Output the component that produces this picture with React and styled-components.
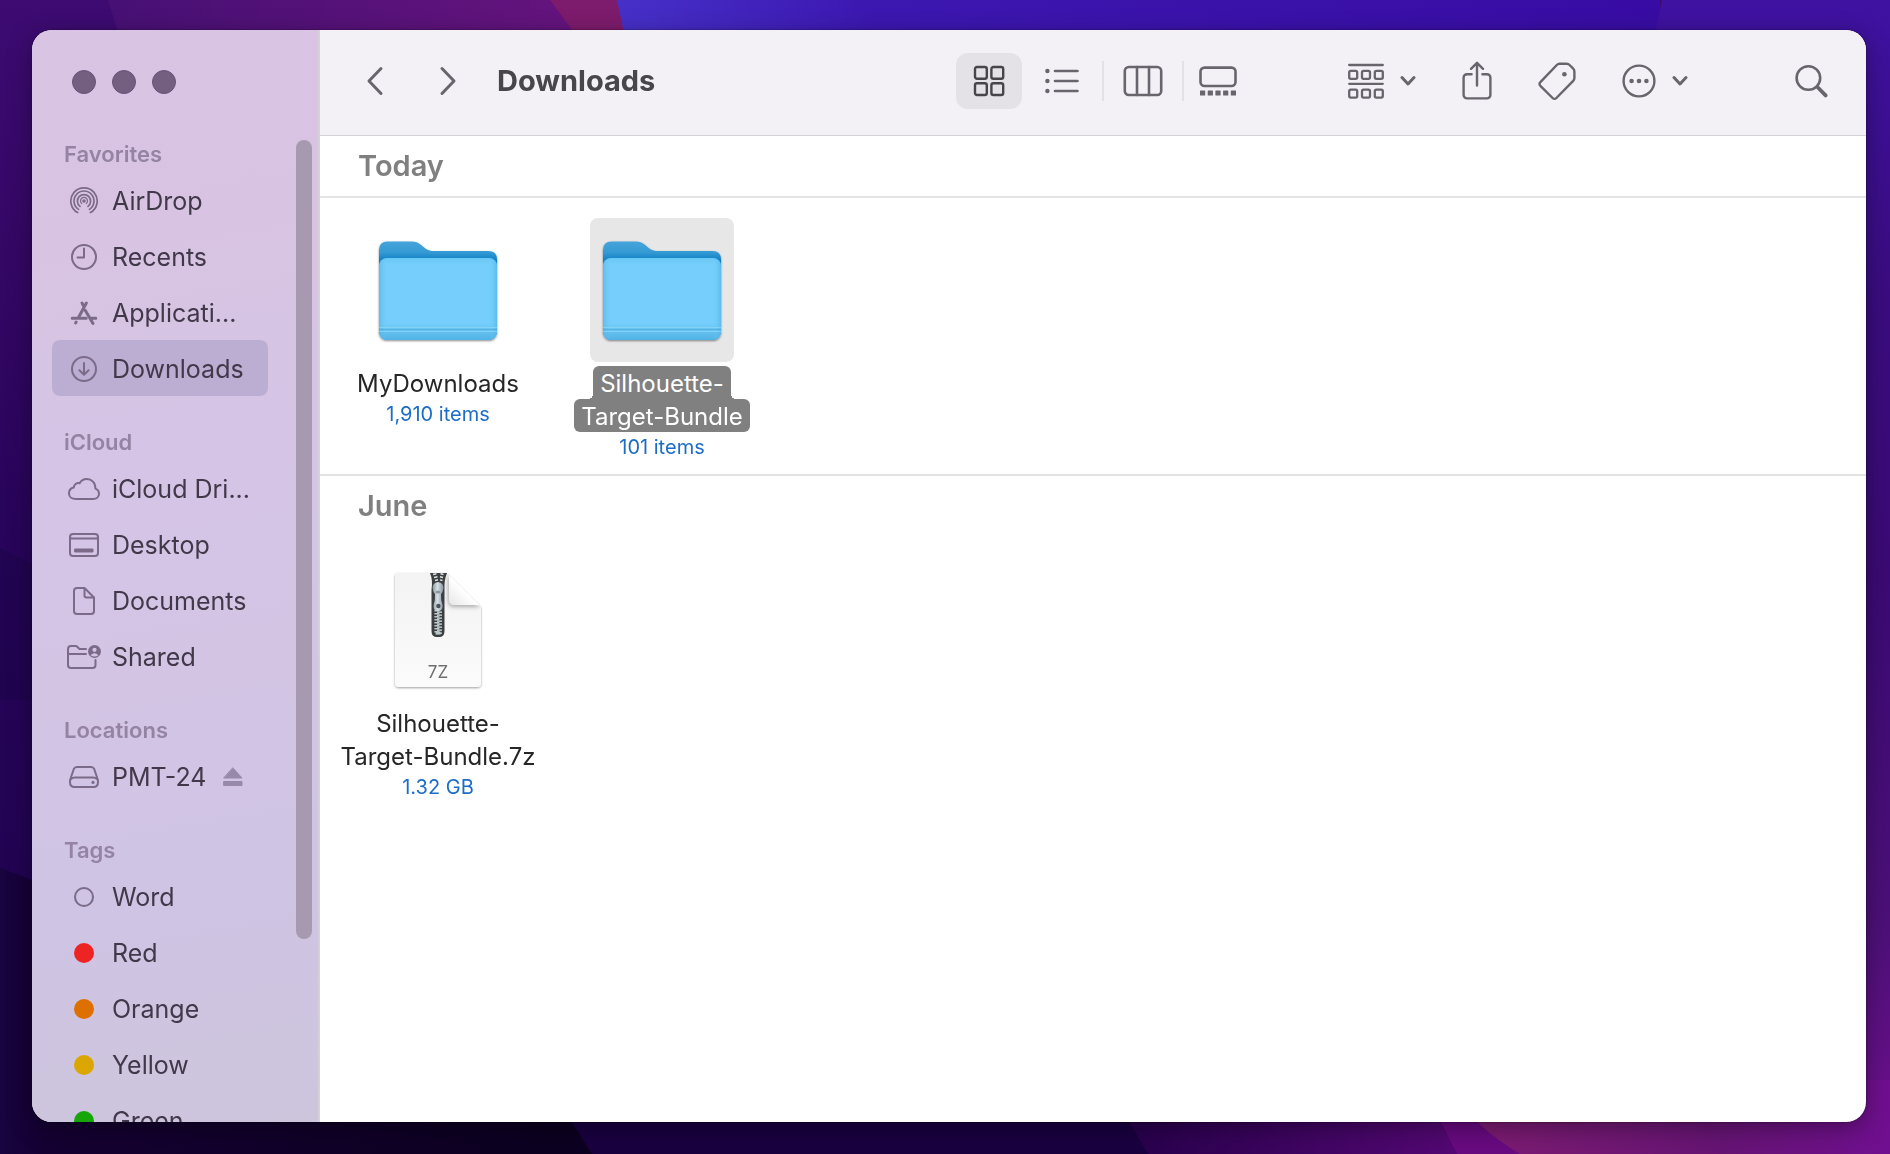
import React from "react";
import styled, { createGlobalStyle } from "styled-components";

const GlobalStyle = createGlobalStyle`
  * {
    box-sizing: border-box;
  }
  body {
    margin: 0;
    font-family: Inter, "Liberation Sans", sans-serif;
    background: #1c034c;
  }
  button {
    padding: 0;
    border: 0;
    background: none;
    font: inherit;
    color: inherit;
  }
  svg {
    display: block;
    flex: none;
  }
`;

const Desktop = styled.div`
  display: flex;
  height: 100vh;
  padding: 30px 24px 32px 32px;
`;

const WallpaperSvg = styled.svg`
  position: fixed;
  inset: 0;
  width: 100%;
  height: 100%;
  z-index: -1;
`;

const Window = styled.div`
  display: flex;
  flex: 1;
  min-width: 0;
  overflow: hidden;
  border-radius: 20px;
  background: #ffffff;
  box-shadow: 0 0 2px rgba(0, 0, 0, 0.6), 0 6px 24px rgba(0, 0, 0, 0.35);
`;

const Sidebar = styled.aside`
  display: flex;
  flex-direction: column;
  flex: none;
  width: 288px;
  overflow: hidden;
  border-right: 2px solid #d6d0dc;
  background: linear-gradient(
    170deg,
    #d9c5e3 0%,
    #d8c4e2 20%,
    #d5c4e6 40%,
    #d3c4e4 60%,
    #cfc4e4 78%,
    #cdc5dc 100%
  );
`;

const WindowControls = styled.div`
  display: flex;
  flex: none;
  align-items: center;
  gap: 16px;
  height: 106px;
  padding: 0 0 2px 40px;
`;

const ControlDot = styled.button`
  width: 24px;
  height: 24px;
  border-radius: 50%;
  border: 1px solid #67537a;
  background: #745f80;
`;

const SidebarScroll = styled.div`
  display: flex;
  flex: 1;
  justify-content: space-between;
  min-height: 0;
  padding: 0 6px 0 20px;
`;

const SidebarNav = styled.nav`
  width: 216px;
`;

const ScrollThumb = styled.div`
  width: 16px;
  height: 81%;
  margin-top: 4px;
  border-radius: 8px;
  background: #a699b0;
`;

const SidebarGroup = styled.section`
  margin-bottom: 28px;
`;

const GroupLabel = styled.h2`
  height: 36px;
  margin: 0;
  padding-left: 12px;
  font-size: 22px;
  font-weight: 600;
  line-height: 36px;
  color: #9583a3;
`;

const SidebarItem = styled.a`
  display: flex;
  align-items: center;
  gap: 12px;
  height: 56px;
  padding: 2px 0 0 16px;
  border-radius: 8px;
  font-size: 25px;
  line-height: 32px;
  white-space: nowrap;
  text-decoration: none;
  color: #41384a;
  background: ${(props) => (props.$active ? "#bcadd3" : "none")};
`;

const IconSlot = styled.span`
  display: flex;
  flex: none;
  justify-content: center;
  width: 32px;
  color: #7c6b88;
`;

const TagDot = styled.span`
  width: 20px;
  height: 20px;
  border-radius: 50%;
  border: ${(props) => (props.$color ? "0" : "2px solid #7a6b88")};
  background: ${(props) => props.$color || "none"};
`;

const EjectButton = styled.button`
  margin-left: 4px;
  color: #9888a9;
`;

const Main = styled.main`
  flex: 1;
  min-width: 0;
`;

const Toolbar = styled.header`
  display: flex;
  align-items: center;
  height: 106px;
  padding: 0 38px 3px 31px;
  border-bottom: 1px solid #d4d2d6;
  background: #f3f0f6;
  color: #69656c;
`;

const NavButton = styled.button`
  display: flex;
  align-items: center;
  justify-content: center;
  width: 48px;
  height: 56px;
  margin-right: 25px;
`;

const Title = styled.h1`
  margin: 0 auto 0 0;
  font-size: 29px;
  font-weight: 700;
  line-height: 40px;
  color: #48464a;
`;

const ViewSwitcher = styled.div`
  display: flex;
  align-items: center;
  height: 56px;
  margin-right: 96px;
`;

const ViewButton = styled.button`
  display: flex;
  align-items: center;
  justify-content: center;
  width: ${(props) => props.$width}px;
  height: 56px;
  border-radius: 12px;
  color: ${(props) => (props.$active ? "#48444a" : "inherit")};
  background: ${(props) => (props.$active ? "#e4e2e7" : "none")};
`;

const ViewDivider = styled.span`
  width: 2px;
  height: 40px;
  background: #e3e1e6;
`;

const Actions = styled.div`
  display: flex;
  align-items: center;
  gap: 46px;
  margin-right: 107px;
`;

const ActionButton = styled.button`
  display: flex;
  align-items: center;
  gap: 16px;
`;

const SectionHeader = styled.h2`
  height: 62px;
  margin: 0;
  padding-left: 38px;
  border-bottom: ${(props) => (props.$line ? "2px solid #e4e4e4" : "0")};
  font-size: 29px;
  font-weight: 600;
  line-height: 60px;
  color: #808080;
`;

const FileSection = styled.section`
  border-bottom: ${(props) => (props.$line ? "2px solid #e2e2e2" : "0")};
`;

const FileGrid = styled.div`
  display: flex;
  flex-wrap: wrap;
  padding: 20px 0 12px 6px;
`;

const FileTile = styled.button`
  display: flex;
  flex-direction: column;
  align-items: center;
  justify-content: flex-start;
  width: 224px;
  text-align: center;
`;

const FileIcon = styled.span`
  display: flex;
  align-items: center;
  justify-content: center;
  width: 144px;
  height: 144px;
  margin-bottom: 4px;
  border-radius: 8px;
  background: ${(props) => (props.$selected ? "#e7e7e7" : "none")};
`;

const FileName = styled.span`
  display: flex;
  flex-direction: column;
  align-items: center;
  font-size: 24px;
  line-height: 31px;
  color: ${(props) => (props.$selected ? "#ffffff" : "#262626")};
`;

const NameLine = styled.span`
  position: relative;
  padding: 2px 7px 0;
  border-radius: 6px;
  white-space: nowrap;
  background: ${(props) => (props.$selected ? "#808080" : "none")};

  &:first-child:not(:last-child) {
    border-radius: 6px 6px 0 0;
  }

  /* rounded inner corners where a short line meets a longer one */
  &:first-child:not(:last-child)::before,
  &:first-child:not(:last-child)::after {
    content: ${(props) => (props.$selected ? '""' : "none")};
    position: absolute;
    bottom: 0;
    width: 5px;
    height: 5px;
  }
  &::before {
    right: 100%;
    background: radial-gradient(circle at 0 0, transparent 5px, #808080 5px);
  }
  &::after {
    left: 100%;
    background: radial-gradient(circle at 100% 0, transparent 5px, #808080 5px);
  }
`;

const FileMeta = styled.span`
  font-size: 20px;
  line-height: 30px;
  color: #1c6dc8;
`;

const Wallpaper = () => (
  <WallpaperSvg viewBox="0 0 1890 1154" preserveAspectRatio="none" aria-hidden="true">
    <defs>
      <linearGradient id="wall-left" x1="0" y1="0" x2="0" y2="1">
        <stop offset="0" stopColor="#3d0b72" />
        <stop offset="0.2" stopColor="#350766" />
        <stop offset="0.46" stopColor="#28045a" />
        <stop offset="1" stopColor="#1c024c" />
      </linearGradient>
      <linearGradient id="wall-plum" x1="110" x2="600" y1="0" y2="0" gradientUnits="userSpaceOnUse">
        <stop offset="0" stopColor="#471074" />
        <stop offset="1" stopColor="#66147e" />
      </linearGradient>
      <linearGradient id="wall-blue" x1="617" x2="1650" y1="0" y2="0" gradientUnits="userSpaceOnUse">
        <stop offset="0" stopColor="#4630c8" />
        <stop offset="0.25" stopColor="#3c17b0" />
        <stop offset="1" stopColor="#380ca4" />
      </linearGradient>
      <linearGradient id="wall-right" x1="0" y1="0" x2="0" y2="1">
        <stop offset="0" stopColor="#3f12a2" />
        <stop offset="0.25" stopColor="#3a0c80" />
        <stop offset="0.5" stopColor="#3b0a74" />
        <stop offset="0.8" stopColor="#4c1078" />
        <stop offset="1" stopColor="#721090" />
      </linearGradient>
      <linearGradient id="wall-dark" x1="0" x2="560" y1="0" y2="0" gradientUnits="userSpaceOnUse">
        <stop offset="0" stopColor="#18043f" />
        <stop offset="0.08" stopColor="#150032" />
        <stop offset="1" stopColor="#0c0020" />
      </linearGradient>
      <linearGradient id="wall-violet" x1="1110" x2="1460" y1="0" y2="0" gradientUnits="userSpaceOnUse">
        <stop offset="0" stopColor="#25004a" />
        <stop offset="1" stopColor="#540874" />
      </linearGradient>
      <linearGradient id="wall-pink" x1="1470" x2="1890" y1="0" y2="0" gradientUnits="userSpaceOnUse">
        <stop offset="0" stopColor="#7e1c72" />
        <stop offset="0.6" stopColor="#661474" />
        <stop offset="1" stopColor="#700f90" />
      </linearGradient>
    </defs>
    <rect width="1890" height="1154" fill="url(#wall-left)" />
    <path d="M0 548L40 568V700H0Z" fill="#1c034a" opacity="0.5" />
    <path d="M108 0H640V200H170Z" fill="url(#wall-plum)" />
    <path d="M550 0H630V110Q580 40 550 0Z" fill="#7d1b6c" />
    <path d="M617 0H1660V200H660Z" fill="url(#wall-blue)" />
    <path d="M1662 0H1890V1154H1700V200H1620Z" fill="url(#wall-right)" />
    <path d="M0 868L60 890L540 1040L600 1154H0Z" fill="url(#wall-dark)" />
    <path d="M520 1040L592 1154H1200V1040Z" fill="#190040" />
    <path d="M1105 1080L1148 1154H1480V1080Z" fill="url(#wall-violet)" />
    <path d="M1420 1080L1457 1154H1540L1460 1080Z" fill="#680a80" />
    <path d="M1458 1100Q1480 1130 1520 1154H1890V1080H1450Z" fill="url(#wall-pink)" />
  </WallpaperSvg>
);

const Svg = ({ w, h, sw = 2, children }) => (
  <svg
    width={w}
    height={h}
    viewBox={`0 0 ${w} ${h}`}
    fill="none"
    stroke="currentColor"
    strokeWidth={sw}
    strokeLinecap="round"
    strokeLinejoin="round"
    aria-hidden="true"
  >
    {children}
  </svg>
);

const AirDropIcon = () => (
  <Svg w={30} h={30} sw={1.7}>
    <path d="M8.6 26.6A13.2 13.2 0 1 1 21.4 26.6" />
    <path d="M9.6 23.4A10 10 0 1 1 20.4 23.4" />
    <path d="M11 20.4A6.6 6.6 0 1 1 19 20.4" />
    <path d="M12.8 17.6A3.5 3.5 0 1 1 17.2 17.6" strokeWidth="1.2" />
    <circle cx="15" cy="15" r="1.8" fill="currentColor" stroke="none" />
  </Svg>
);

const RecentsIcon = () => (
  <Svg w={28} h={28}>
    <circle cx="14" cy="14" r="12" />
    <path d="M14 5.5V14.5H7.5" />
  </Svg>
);

const ApplicationsIcon = () => (
  <Svg w={28} h={26} sw={3}>
    <path d="M12 3L13.4 5.6M16.4 3L8.6 17.2M2.2 18.2H16.2M5.6 23L6.2 22" />
    <path d="M15.2 10.2L23 23.4M21 18.2H25.8" />
  </Svg>
);

const DownloadsIcon = () => (
  <Svg w={28} h={28}>
    <circle cx="14" cy="14" r="12" />
    <path d="M14 8V19.5M9.4 15.2L14 19.8L18.6 15.2" />
  </Svg>
);

const CloudIcon = () => (
  <Svg w={32} h={26}>
    <path d="M8 23H25.2C28.6 23 31 20.8 31 17.8C31 15.2 29.6 13.4 27.4 12.6C27.6 6.8 23.6 3 18.8 3C15.6 3 13 4.6 11.6 7.2C8.6 6.4 5.8 8.6 5.8 11.6C3 12.2 1 14.4 1 17.4C1 20.6 3.8 23 8 23Z" />
  </Svg>
);

const DesktopIcon = () => (
  <Svg w={30} h={24}>
    <rect x="1" y="1" width="28" height="22" rx="3" />
    <path d="M1 5.5H29" />
    <rect x="6" y="16" width="18" height="3" fill="currentColor" strokeWidth="1" />
  </Svg>
);

const DocumentsIcon = () => (
  <Svg w={22} h={28}>
    <path d="M4 1H11.5L21 10.5V24A3 3 0 0 1 18 27H4A3 3 0 0 1 1 24V4A3 3 0 0 1 4 1Z" />
    <path d="M11.5 1.5V8.5A2 2 0 0 0 13.5 10.5H20.5" />
  </Svg>
);

const SharedIcon = () => (
  <Svg w={34} h={26}>
    <path d="M19 5H12.5L10.5 3C10 2.4 9.4 2 8.6 2H4A3 3 0 0 0 1 5V21A3 3 0 0 0 4 24H25.5A3 3 0 0 0 28.5 21V16M1 10H19" />
    <circle cx="27.5" cy="7.5" r="6.5" fill="currentColor" stroke="none" />
    <circle cx="27.5" cy="5.8" r="2.1" fill="#d3c4e5" stroke="none" />
    <path d="M23.6 11.2Q27.5 7.2 31.4 11.2Q27.5 14 23.6 11.2Z" fill="#d3c4e5" stroke="none" />
  </Svg>
);

const DriveIcon = () => (
  <Svg w={30} h={24}>
    <path d="M7.8 2H22.2C23.6 2 24.6 2.8 25.2 4L28.6 14C28.9 15 29 16 29 17C29 20.4 27.4 22 24.6 22H5.4C2.6 22 1 20.4 1 17C1 16 1.1 15 1.4 14L4.8 4C5.4 2.8 6.4 2 7.8 2Z" />
    <path d="M2 14.2Q3.4 12.5 6 12.5H24Q26.6 12.5 28 14.2" />
    <circle cx="24" cy="17.4" r="1.6" fill="currentColor" stroke="none" />
  </Svg>
);

const EjectIcon = () => (
  <Svg w={20} h={20} sw={1}>
    <path d="M10 1L19 11H1Z" fill="currentColor" />
    <rect x="1" y="14.5" width="18" height="4" fill="currentColor" />
  </Svg>
);

const ChevronDown = () => (
  <Svg w={16} h={12} sw={3}>
    <path d="M2 2.5L8 9L14 2.5" />
  </Svg>
);

const GridIcon = () => (
  <Svg w={32} h={32} sw={2.4}>
    <rect x="2" y="2" width="11.8" height="11.8" rx="2" />
    <rect x="18.4" y="2" width="11.8" height="11.8" rx="2" />
    <rect x="2" y="18.2" width="11.8" height="11.8" rx="2" />
    <rect x="18.4" y="18.2" width="11.8" height="11.8" rx="2" />
  </Svg>
);

const ListIcon = () => (
  <Svg w={34} h={28} sw={2.6}>
    <path d="M10 4H32.5M10 14H32.5M10 24H32.5" />
    <g fill="currentColor" stroke="none">
      <circle cx="2.4" cy="4" r="2.2" />
      <circle cx="2.4" cy="14" r="2.2" />
      <circle cx="2.4" cy="24" r="2.2" />
    </g>
  </Svg>
);

const ColumnsIcon = () => (
  <Svg w={40} h={32} sw={2.6}>
    <rect x="1.8" y="2" width="36.4" height="28" rx="4" />
    <path d="M14 2V30M26 2V30" />
  </Svg>
);

const GalleryIcon = () => (
  <Svg w={38} h={32} sw={2.6}>
    <rect x="1.5" y="2.6" width="35" height="18.4" rx="4" />
    <g fill="currentColor" stroke="none">
      {[1, 8.7, 16.4, 24.1, 31.8].map((x) => (
        <rect key={x} x={x} y="25.4" width="5.2" height="5.2" rx="0.6" />
      ))}
    </g>
  </Svg>
);

const GroupIcon = () => (
  <Svg w={36} h={36} sw={2.3}>
    <path d="M1.2 2H34.8M1.2 20.8H34.8" />
    {[7.8, 26.6].map((y) =>
      [1.2, 14, 26.8].map((x) => (
        <rect key={`${x}-${y}`} x={x} y={y} width="8" height="8" rx="1.6" />
      ))
    )}
  </Svg>
);

const ShareIcon = () => (
  <Svg w={30} h={40} sw={2.4}>
    <path d="M9.6 13.2H5A3.4 3.4 0 0 0 1.6 16.6V34A3.4 3.4 0 0 0 5 37.4H25A3.4 3.4 0 0 0 28.4 34V16.6A3.4 3.4 0 0 0 25 13.2H20.4" />
    <path d="M15 24.6V2M9 7.8L15 1.8L21 7.8" />
  </Svg>
);

const TagIcon = () => (
  <Svg w={38} h={40} sw={2.4}>
    <path d="M21.4 2.8H28.6C30 2.8 30.8 3.2 31.6 4L35 7.4C36 8.4 36.4 9.2 36.4 10.6V17C36.4 18.2 36 19 35.2 19.8L18.4 37C17.2 38.2 15.8 38.2 14.6 37L2.4 24.8C1.2 23.6 1.2 22.4 2.4 21.2L18.8 4C19.6 3.2 20.2 2.8 21.4 2.8Z" />
    <circle cx="26.4" cy="13.2" r="2.3" fill="currentColor" stroke="none" />
  </Svg>
);

const MoreIcon = () => (
  <Svg w={34} h={34} sw={2.4}>
    <circle cx="17" cy="17" r="15.4" />
    <g fill="currentColor" stroke="none">
      <circle cx="9.6" cy="17" r="2.3" />
      <circle cx="17" cy="17" r="2.3" />
      <circle cx="24.4" cy="17" r="2.3" />
    </g>
  </Svg>
);

const SearchIcon = () => (
  <Svg w={33} h={34} sw={2.6}>
    <circle cx="13.4" cy="14" r="11.8" />
    <path d="M22.4 23L30.6 31.4" strokeWidth="3.8" />
  </Svg>
);

const FolderIcon = () => (
  <svg width="128" height="128" viewBox="0 0 128 128" aria-hidden="true">
    <defs>
      <linearGradient id="folder-back" x1="0" y1="0" x2="0" y2="1">
        <stop offset="0" stopColor="#46a4da" />
        <stop offset="0.11" stopColor="#349ad4" />
        <stop offset="0.19" stopColor="#0f80c4" />
      </linearGradient>
      <linearGradient id="folder-front" x1="0" y1="0" x2="0" y2="1">
        <stop offset="0" stopColor="#6ac8f6" />
        <stop offset="0.08" stopColor="#74cefb" />
        <stop offset="0.8" stopColor="#74cefb" />
        <stop offset="0.88" stopColor="#66c3f2" />
        <stop offset="1" stopColor="#52b2e4" />
      </linearGradient>
      <linearGradient id="folder-sides" x1="0" y1="0" x2="1" y2="0">
        <stop offset="0" stopColor="#4db0e4" stopOpacity="0.6" />
        <stop offset="0.07" stopColor="#74cefb" stopOpacity="0" />
        <stop offset="0.93" stopColor="#74cefb" stopOpacity="0" />
        <stop offset="1" stopColor="#4db0e4" stopOpacity="0.6" />
      </linearGradient>
      <filter id="folder-shadow" x="-10%" y="-10%" width="120%" height="125%">
        <feDropShadow dx="0" dy="1" stdDeviation="1" floodColor="#000" floodOpacity="0.45" />
      </filter>
    </defs>
    <g filter="url(#folder-shadow)">
      <path
        d="M5 24Q5 15.5 13.5 15.5H38Q43 15.5 46.5 18.5L51 22.2Q54.5 25 60 25H114.5Q123 25 123 33.5V104Q123 114 113 114H15Q5 114 5 104Z"
        fill="url(#folder-back)"
      />
      <rect x="5" y="32" width="118" height="82" rx="8" fill="url(#folder-front)" />
      <rect x="5" y="32" width="118" height="82" rx="8" fill="url(#folder-sides)" />
    </g>
    <path d="M5 101.5H123M5 105.5H123" stroke="#8ad6f8" strokeWidth="0.8" />
    <path d="M5 103.5H123" stroke="#50aede" strokeWidth="0.8" />
  </svg>
);

const teeth = [0, 1, 2, 3, 4, 5, 6, 7];

const ArchiveIcon = () => (
  <svg width="128" height="128" viewBox="0 0 128 128" aria-hidden="true">
    <defs>
      <linearGradient id="page-fill" x1="0" y1="0" x2="0" y2="1">
        <stop offset="0" stopColor="#f3f3f3" />
        <stop offset="1" stopColor="#fbfbfb" />
      </linearGradient>
      <linearGradient id="page-fold" x1="0" y1="1" x2="1" y2="0">
        <stop offset="0" stopColor="#e6e6e6" />
        <stop offset="0.45" stopColor="#ffffff" />
      </linearGradient>
      <linearGradient id="zip-pull" x1="0" y1="0" x2="1" y2="0">
        <stop offset="0" stopColor="#8f9ba2" />
        <stop offset="0.45" stopColor="#d5dfe5" />
        <stop offset="1" stopColor="#87949b" />
      </linearGradient>
      <filter id="page-shadow" x="-10%" y="-10%" width="120%" height="120%">
        <feDropShadow dx="0" dy="1" stdDeviation="1.2" floodColor="#000" floodOpacity="0.38" />
      </filter>
      <filter id="fold-shadow" x="-30%" y="-30%" width="160%" height="160%">
        <feDropShadow dx="-1" dy="2" stdDeviation="2" floodColor="#000" floodOpacity="0.3" />
      </filter>
      <clipPath id="page-clip">
        <path d="M24 7H73L107 41V117Q107 121 103 121H25Q21 121 21 117V10Q21 7 24 7Z" />
      </clipPath>
    </defs>
    <path
      d="M24 7H73L107 41V117Q107 121 103 121H25Q21 121 21 117V10Q21 7 24 7Z"
      fill="url(#page-fill)"
      filter="url(#page-shadow)"
    />
    <g clipPath="url(#page-clip)">
      <path d="M75 7V33Q75 39 81 39H107Z" fill="url(#page-fold)" filter="url(#fold-shadow)" />
    </g>
    <path d="M56 7H73Q70 14 70.5 24V65Q70.5 71 65 71H63Q57.5 71 57.5 65V24Q59 14 56 7Z" fill="#3c3e40" />
    <path
      d="M59 8.5L62.5 7.8M60 11.5L63.5 10.8M61 14.5L64 13.8M69.5 8.5L66.5 7.8M69 11.5L66 10.8M68.5 14.5L66 13.8"
      stroke="#dbe4e4"
      strokeWidth="1.4"
    />
    <g fill="#bcc9cb">
      {teeth.map((i) => (
        <React.Fragment key={i}>
          <rect x="60.4" y={44 + i * 3} width="5" height="1.5" />
          <rect x="63" y={45.4 + i * 3} width="5" height="1.5" />
        </React.Fragment>
      ))}
      <rect x="61.6" y="65.6" width="5" height="3" />
    </g>
    <path
      d="M64 16Q69.6 17 69.5 22Q69 26 67 28Q66.6 34 68.6 39Q69 45 64 45Q59 45 59.6 39Q61.4 34 61 28Q59 26 58.6 22Q58.4 17 64 16Z"
      fill="url(#zip-pull)"
    />
    <ellipse cx="64" cy="26" rx="2.6" ry="1.6" fill="#8c989f" />
    <circle cx="64.4" cy="40" r="2.2" fill="#4a5256" />
    <text x="64" y="112" textAnchor="middle" fontFamily="Inter, sans-serif" fontSize="17" fill="#6e6e6e">
      7Z
    </text>
  </svg>
);

const sidebarGroups = [
  {
    label: "Favorites",
    items: [
      { name: "AirDrop", icon: <AirDropIcon /> },
      { name: "Recents", icon: <RecentsIcon /> },
      { name: "Applicati...", icon: <ApplicationsIcon /> },
      { name: "Downloads", icon: <DownloadsIcon />, active: true },
    ],
  },
  {
    label: "iCloud",
    items: [
      { name: "iCloud Dri...", icon: <CloudIcon /> },
      { name: "Desktop", icon: <DesktopIcon /> },
      { name: "Documents", icon: <DocumentsIcon /> },
      { name: "Shared", icon: <SharedIcon /> },
    ],
  },
  {
    label: "Locations",
    items: [{ name: "PMT-24", icon: <DriveIcon />, eject: true }],
  },
  {
    label: "Tags",
    items: [
      { name: "Word", icon: <TagDot /> },
      { name: "Red", icon: <TagDot $color="#ee2424" /> },
      { name: "Orange", icon: <TagDot $color="#de7000" /> },
      { name: "Yellow", icon: <TagDot $color="#dca600" /> },
      { name: "Green", icon: <TagDot $color="#17a608" /> },
    ],
  },
];

const fileSections = [
  {
    title: "Today",
    line: true,
    files: [
      { lines: ["MyDownloads"], meta: "1,910 items", icon: <FolderIcon /> },
      {
        lines: ["Silhouette-", "Target-Bundle"],
        meta: "101 items",
        icon: <FolderIcon />,
        selected: true,
      },
    ],
  },
  {
    title: "June",
    line: false,
    files: [
      {
        lines: ["Silhouette-", "Target-Bundle.7z"],
        meta: "1.32 GB",
        icon: <ArchiveIcon />,
      },
    ],
  },
];

const FinderSidebar = () => (
  <Sidebar>
    <WindowControls>
      <ControlDot aria-label="Close" />
      <ControlDot aria-label="Minimize" />
      <ControlDot aria-label="Zoom" />
    </WindowControls>
    <SidebarScroll>
      <SidebarNav>
        {sidebarGroups.map((group) => (
          <SidebarGroup key={group.label}>
            <GroupLabel>{group.label}</GroupLabel>
            {group.items.map((item) => (
              <SidebarItem key={item.name} href="#" $active={item.active}>
                <IconSlot>{item.icon}</IconSlot>
                {item.name}
                {item.eject && (
                  <EjectButton aria-label="Eject">
                    <EjectIcon />
                  </EjectButton>
                )}
              </SidebarItem>
            ))}
          </SidebarGroup>
        ))}
      </SidebarNav>
      <ScrollThumb />
    </SidebarScroll>
  </Sidebar>
);

const FinderToolbar = () => (
  <Toolbar>
    <NavButton aria-label="Back">
      <Svg w={18} h={30} sw={3}>
        <path d="M15 2.5L3 15L15 27.5" />
      </Svg>
    </NavButton>
    <NavButton aria-label="Forward">
      <Svg w={18} h={30} sw={3}>
        <path d="M3 2.5L15 15L3 27.5" />
      </Svg>
    </NavButton>
    <Title>Downloads</Title>
    <ViewSwitcher>
      <ViewButton $width={66} $active aria-label="Icons">
        <GridIcon />
      </ViewButton>
      <ViewButton $width={80} aria-label="List">
        <ListIcon />
      </ViewButton>
      <ViewDivider />
      <ViewButton $width={78} aria-label="Columns">
        <ColumnsIcon />
      </ViewButton>
      <ViewDivider />
      <ViewButton $width={68} aria-label="Gallery">
        <GalleryIcon />
      </ViewButton>
    </ViewSwitcher>
    <Actions>
      <ActionButton aria-label="Group">
        <GroupIcon />
        <ChevronDown />
      </ActionButton>
      <ActionButton aria-label="Share">
        <ShareIcon />
      </ActionButton>
      <ActionButton aria-label="Tags">
        <TagIcon />
      </ActionButton>
      <ActionButton aria-label="More">
        <MoreIcon />
        <ChevronDown />
      </ActionButton>
    </Actions>
    <ActionButton aria-label="Search">
      <SearchIcon />
    </ActionButton>
  </Toolbar>
);

const App = () => {
  return (
    <>
      <GlobalStyle />
      <Wallpaper />
      <Desktop>
        <Window>
          <FinderSidebar />
          <Main>
            <FinderToolbar />
            {fileSections.map((section) => (
              <FileSection key={section.title} $line={section.line}>
                <SectionHeader $line={section.line}>{section.title}</SectionHeader>
                <FileGrid>
                  {section.files.map((file) => (
                    <FileTile key={file.lines.join("")}>
                      <FileIcon $selected={file.selected}>{file.icon}</FileIcon>
                      <FileName $selected={file.selected}>
                        {file.lines.map((line) => (
                          <NameLine key={line} $selected={file.selected}>
                            {line}
                          </NameLine>
                        ))}
                      </FileName>
                      <FileMeta>{file.meta}</FileMeta>
                    </FileTile>
                  ))}
                </FileGrid>
              </FileSection>
            ))}
          </Main>
        </Window>
      </Desktop>
    </>
  );
};

export default App;
